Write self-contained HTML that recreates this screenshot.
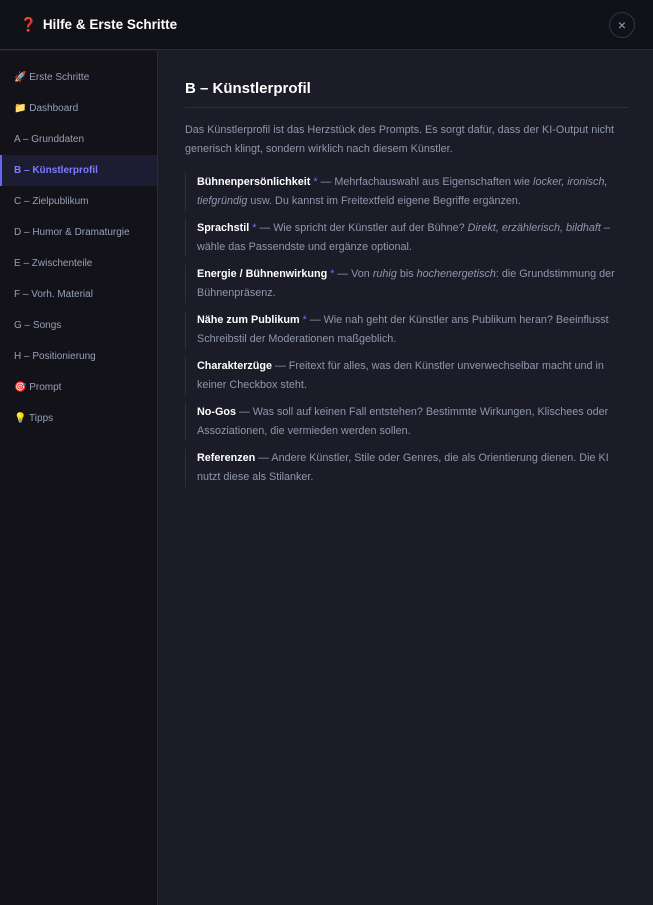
<!DOCTYPE html>
<html><head><meta charset="utf-8"><style>
*{margin:0;padding:0;box-sizing:border-box}
body{width:653px;height:905px;background:#1b1c27;font-family:"Liberation Sans","DejaVu Sans",sans-serif;overflow:hidden;position:relative}
.hdr{position:absolute;left:0;top:0;width:653px;height:50px;background:#111118;border-bottom:1px solid #2a2b3c}
.hdr h1{position:absolute;left:20px;top:17px;font-size:13.5px;color:#fff;font-weight:bold}
.hdr h1 span{color:#e0305a;margin-right:6px}
.close{position:absolute;left:609px;top:12px;width:26px;height:26px;border:1px solid #2e3350;border-radius:50%;color:#9aa4c8;font-size:14px;text-align:center;line-height:24px}
.side{position:absolute;left:0;top:51px;width:158px;height:854px;background:#121218;border-right:1px solid #2a2b3c}
.side div{height:31px;line-height:31px;padding-left:14px;font-size:10px;color:#98a0b8}
.side div.a{background:#1c1c33;color:#7b7cff;font-weight:bold;border-left:2px solid #6366f1;padding-left:12px}
.main{position:absolute;left:185px;top:80px;width:443px}
h2{font-size:15px;color:#fff;padding-bottom:10px;border-bottom:1px solid #2e3042;margin-bottom:13px}
p{font-size:10.8px;color:#9096ad;line-height:19px}
.it{border-left:1px solid #2e3042;padding-left:11px;margin-top:8px;font-size:10.8px;line-height:19px;color:#9096ad}
.it:first-of-type{margin-top:14px}
.it b{color:#fff}
.s{color:#6d70ff}
</style></head><body>
<div class="hdr"><h1><span>❓</span>Hilfe &amp; Erste Schritte</h1><div class="close">×</div></div>
<div class="side" style="padding-top:11px">
<div>🚀 Erste Schritte</div><div>📁 Dashboard</div><div>A – Grunddaten</div><div class="a">B – Künstlerprofil</div><div>C – Zielpublikum</div><div>D – Humor &amp; Dramaturgie</div><div>E – Zwischenteile</div><div>F – Vorh. Material</div><div>G – Songs</div><div>H – Positionierung</div><div>🎯 Prompt</div><div>💡 Tipps</div>
</div>
<div class="main">
<h2>B – Künstlerprofil</h2>
<p>Das Künstlerprofil ist das Herzstück des Prompts. Es sorgt dafür, dass der KI-Output nicht generisch klingt, sondern wirklich nach diesem Künstler.</p>
<div class="it"><b>Bühnenpersönlichkeit</b> <span class="s">*</span> — Mehrfachauswahl aus Eigenschaften wie <i>locker, ironisch, tiefgründig</i> usw. Du kannst im Freitextfeld eigene Begriffe ergänzen.</div>
<div class="it"><b>Sprachstil</b> <span class="s">*</span> — Wie spricht der Künstler auf der Bühne? <i>Direkt, erzählerisch, bildhaft</i> – wähle das Passendste und ergänze optional.</div>
<div class="it"><b>Energie / Bühnenwirkung</b> <span class="s">*</span> — Von <i>ruhig</i> bis <i>hochenergetisch</i>: die Grundstimmung der Bühnenpräsenz.</div>
<div class="it"><b>Nähe zum Publikum</b> <span class="s">*</span> — Wie nah geht der Künstler ans Publikum heran? Beeinflusst Schreibstil der Moderationen maßgeblich.</div>
<div class="it"><b>Charakterzüge</b> — Freitext für alles, was den Künstler unverwechselbar macht und in<br>keiner Checkbox steht.</div>
<div class="it"><b>No-Gos</b> — Was soll auf keinen Fall entstehen? Bestimmte Wirkungen, Klischees oder Assoziationen, die vermieden werden sollen.</div>
<div class="it"><b>Referenzen</b> — Andere Künstler, Stile oder Genres, die als Orientierung dienen. Die KI<br>nutzt diese als Stilanker.</div>
</div>
</body></html>
